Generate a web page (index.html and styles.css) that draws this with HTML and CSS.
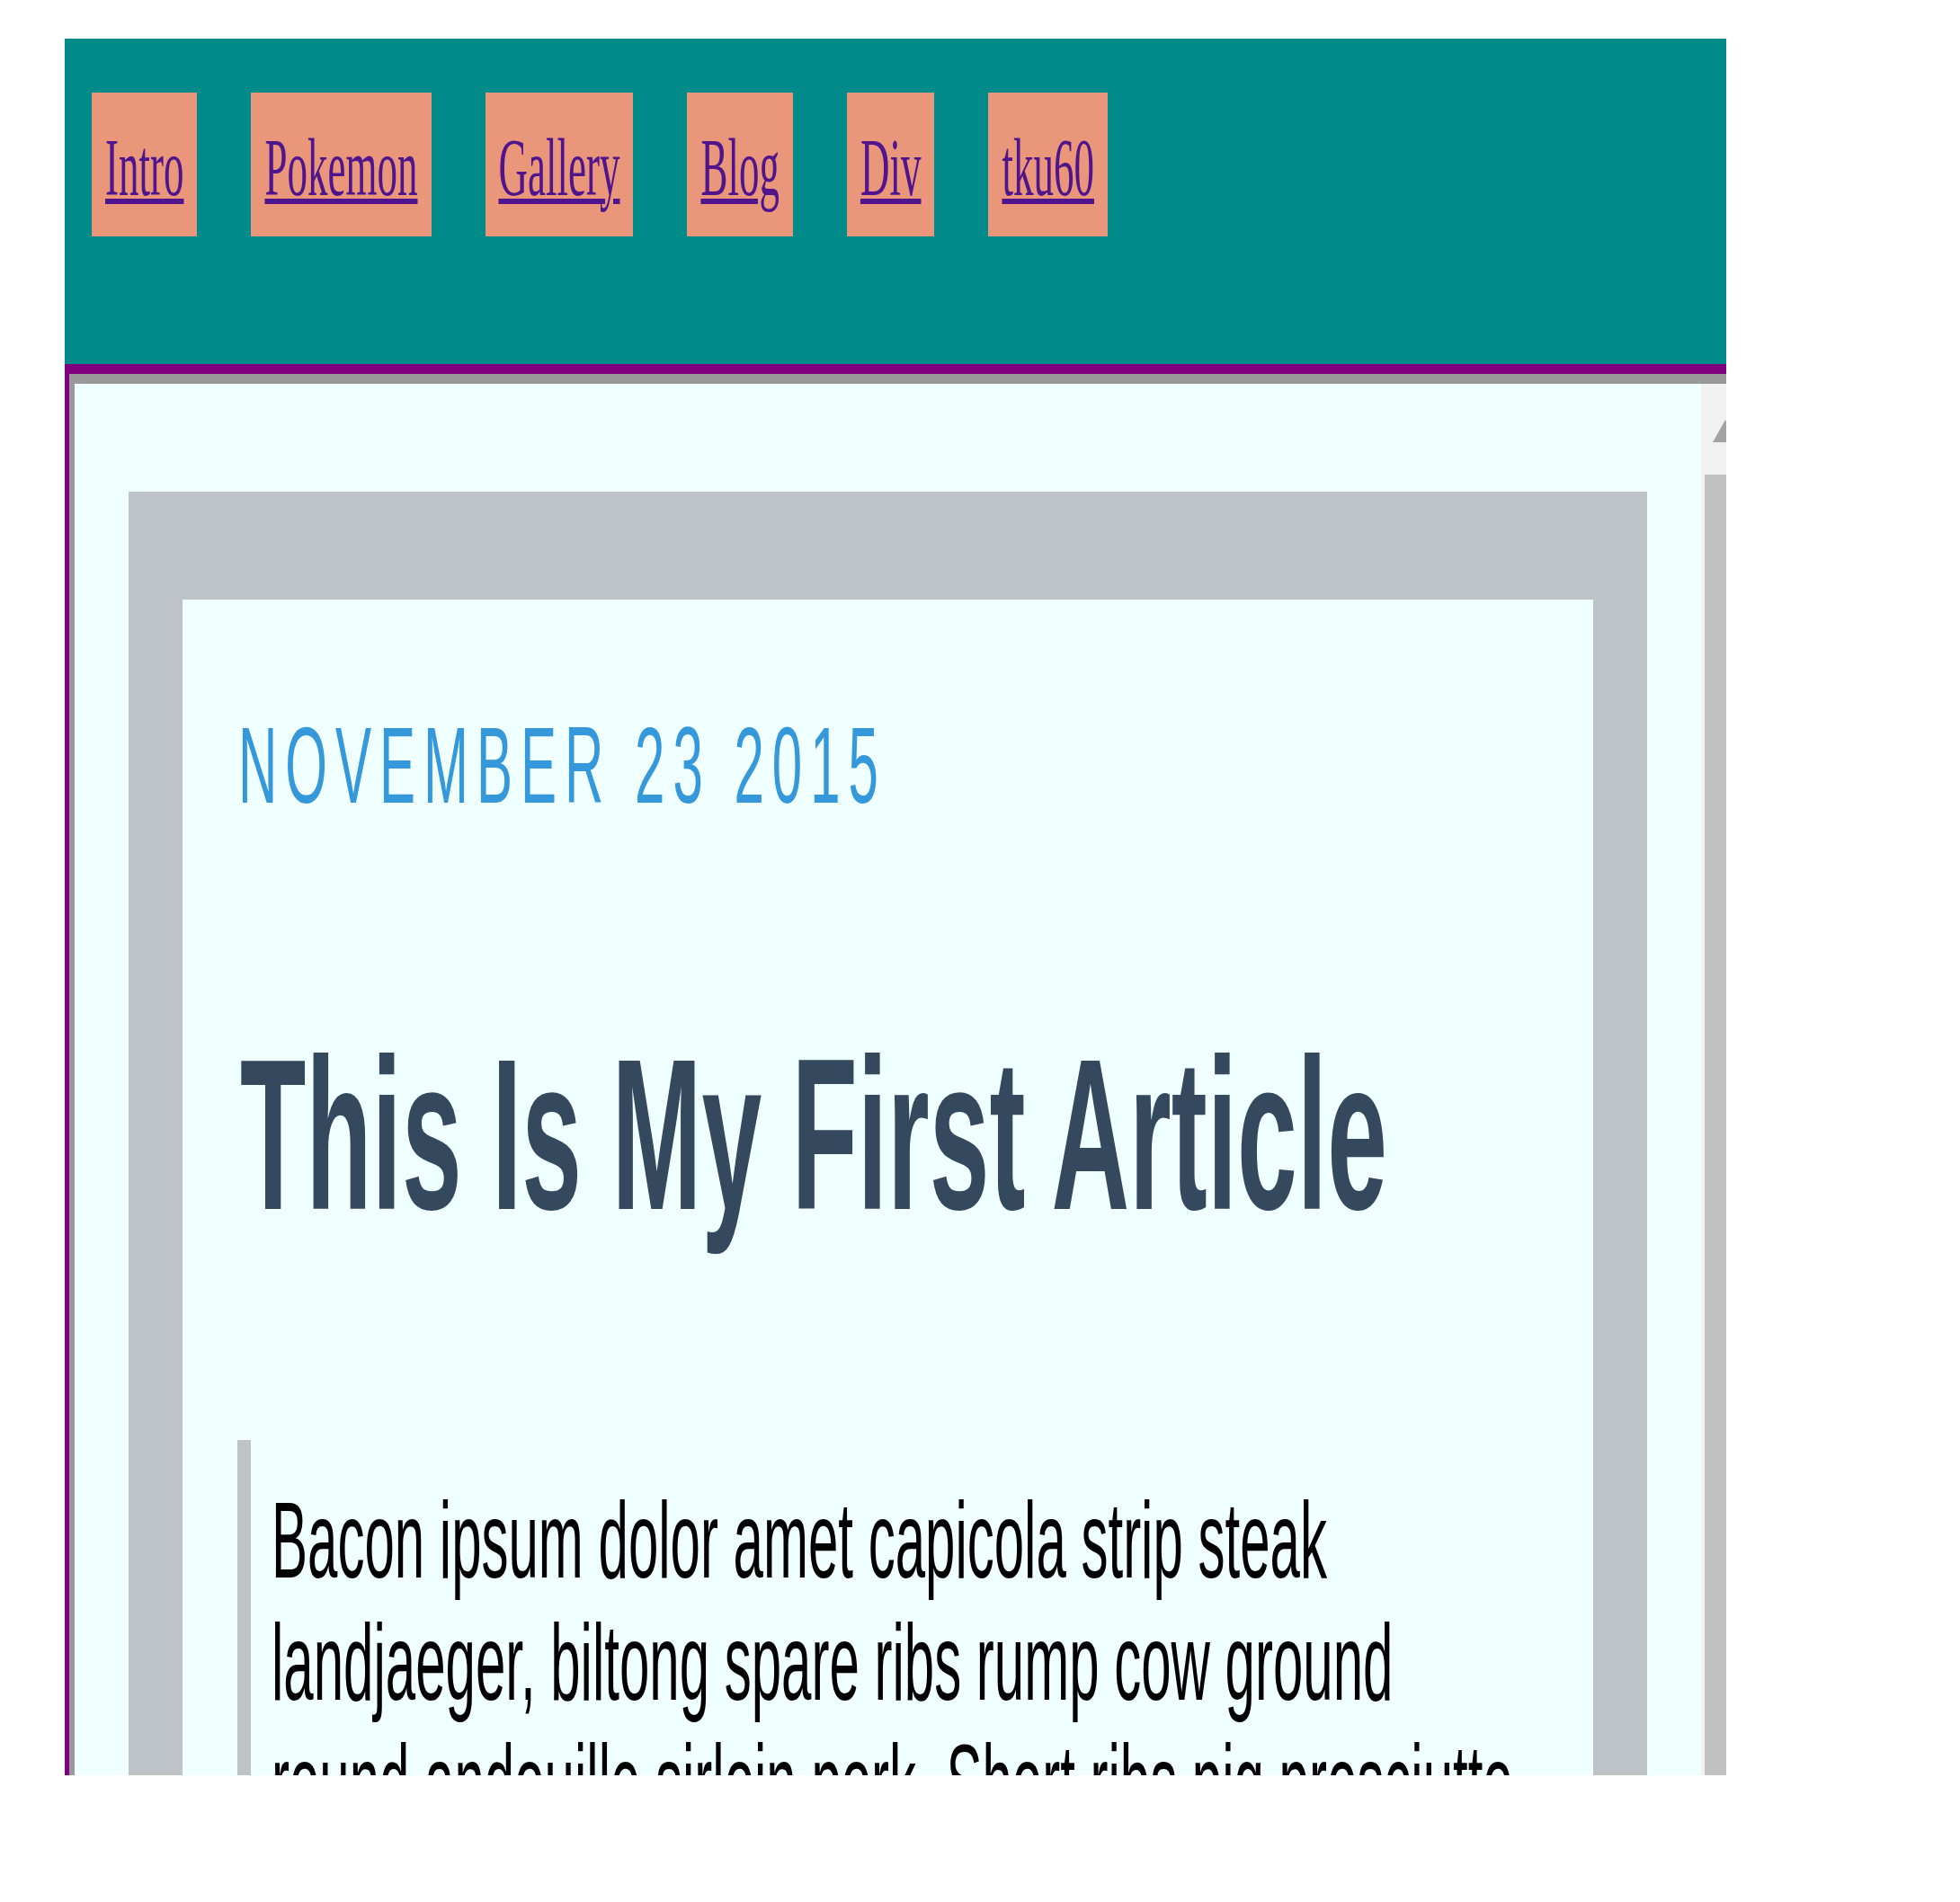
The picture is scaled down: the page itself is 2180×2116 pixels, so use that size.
FILE: index.html
```html
<!DOCTYPE html>
<html lang="en">
<head>
<meta charset="utf-8">
<title>Blog</title>
<link rel="stylesheet" href="styles.css">
</head>
<body>
<div class="page">
  <header class="topbar">
    <nav class="nav">
      <a class="nav-btn" href="#"><span class="label">Intro</span></a>
      <a class="nav-btn" href="#"><span class="label">Pokemon</span></a>
      <a class="nav-btn" href="#"><span class="label">Gallery</span></a>
      <a class="nav-btn" href="#"><span class="label">Blog</span></a>
      <a class="nav-btn" href="#"><span class="label">Div</span></a>
      <a class="nav-btn" href="#"><span class="label">tku60</span></a>
    </nav>
  </header>
  <div class="frame">
    <div class="frame-inner">
      <main class="content">
        <article class="card">
          <div class="card-body">
            <div class="date"><span class="tall">NOVEMBER 23 2015</span></div>
            <div class="title"><h1 class="tall">This Is My First Article</h1></div>
            <blockquote class="quote">
              <p class="tall">Bacon ipsum dolor amet capicola strip steak landjaeger, biltong spare ribs rump cow ground round andouille sirloin pork. Short ribs pig prosciutto turducken, ham hock pastrami tail beef ribs kielbasa chicken.</p>
            </blockquote>
          </div>
        </article>
      </main>
      <div class="scrollbar">
        <div class="sb-arrow">
          <svg class="sb-arrow-icon" width="51" height="101" viewBox="0 0 51 101"><polygon points="13,65 27,40 41,65" fill="#a3a3a3"/></svg>
        </div>
        <div class="sb-thumb"></div>
      </div>
    </div>
  </div>
</div>
</body>
</html>
```
FILE: styles.css
```css
html, body {
  margin: 0;
  padding: 0;
  background: #ffffff;
}

.page {
  margin: 43px 0 0 72px;
  width: 1848px;
  height: 1932px;
  overflow: hidden;
  display: flex;
  flex-direction: column;
}

/* text is drawn twice as tall as it is wide, like the reference */
.tall {
  display: inline-block;
  transform: scaleY(2);
  transform-origin: 0 0;
}

.topbar {
  flex: none;
  height: 362px;
  box-sizing: border-box;
  padding: 60px 30px 0;
  background: #008b8b;
}

.nav {
  display: flex;
  gap: 60px;
}

.nav-btn {
  display: block;
  height: 160px;
  box-sizing: border-box;
  padding: 32px 15px 0;
  background: #e9967a;
  text-decoration: none;
}

.label {
  display: inline-block;
  transform: scaleY(2);
  transform-origin: 0 0;
  font-family: "Liberation Serif", "Times New Roman", serif;
  font-size: 45px;
  line-height: 52px;
  color: #50148c;
  text-decoration: underline;
  text-decoration-thickness: 3px;
}

.frame {
  flex: 1;
  min-height: 0;
  display: flex;
  border-top: 11px solid #800080;
  border-left: 5px solid #800080;
}

.frame-inner {
  flex: 1;
  min-width: 0;
  display: flex;
  border-top: 11px solid #999999;
  border-left: 6px solid #999999;
  background: #f0ffff;
}

.content {
  flex: none;
  width: 1809px;
  box-sizing: border-box;
  padding: 120px 60px;
}

.card {
  border-style: solid;
  border-color: #bdc3c7;
  border-width: 120px 60px;
}

.card-body {
  padding: 116px 60px 120px 62px;
}

.date {
  height: 140px;
  font-family: "Liberation Sans", Arial, sans-serif;
  font-size: 60px;
  line-height: 70px;
  letter-spacing: 9px;
  color: #3498db;
}

.title {
  height: 276px;
  margin-top: 200px;
  padding-left: 2px;
}

.title h1 {
  margin: 0;
  font-family: "Liberation Sans", Arial, sans-serif;
  font-weight: bold;
  font-size: 120px;
  line-height: 138px;
  color: #34495e;
  white-space: nowrap;
}

.quote {
  min-height: 700px;
  margin: 203px 0 0 -1px;
  padding: 45px 0 0 23px;
  border-left: 15px solid #bdc3c7;
}

.quote p {
  display: block;
  margin: 0;
  font-family: "Liberation Sans", Arial, sans-serif;
  font-size: 60px;
  line-height: 67.5px;
  color: #000000;
}

.scrollbar {
  flex: none;
  width: 51px;
  display: flex;
  flex-direction: column;
  background: #f1f1f1;
}

.sb-arrow {
  flex: none;
  height: 101px;
}

.sb-arrow-icon {
  display: block;
}

.sb-thumb {
  flex: 1;
  margin: 0 4px;
  background: #c1c1c1;
}
```
